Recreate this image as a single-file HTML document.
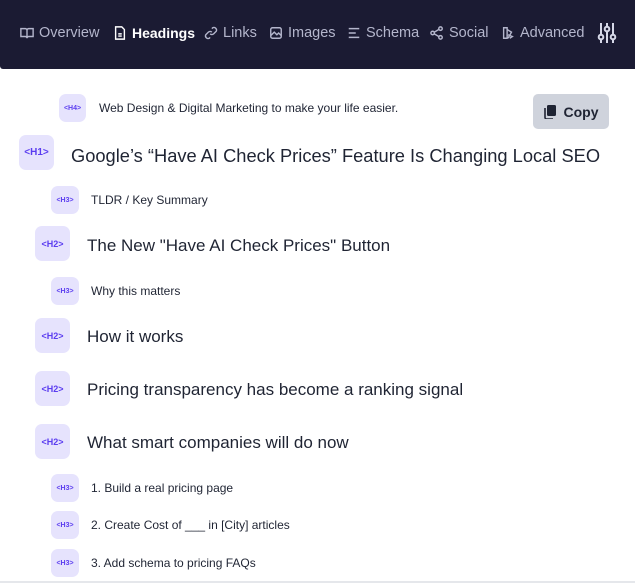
<!DOCTYPE html>
<html><head><meta charset="utf-8"><style>
*{margin:0;padding:0;box-sizing:border-box}
body{width:635px;height:583px;overflow:hidden;background:#fff;font-family:"Liberation Sans",sans-serif;position:relative;color:#1f2937}
.nav{position:absolute;left:0;top:0;width:635px;height:69px;background:#1b1b33;border-bottom-left-radius:3px}
.nav .it{position:absolute;top:24px;font-size:14.5px;color:#b4b6cc;display:flex;align-items:center;gap:5px;height:18px}
.nav .it svg{width:14px;height:14px;stroke:currentColor;fill:none;stroke-width:1.6}
.nav .act{color:#fff;font-weight:bold;font-size:14px}
.b{position:absolute;background:#e6e3fd;color:#5b3df0;font-weight:bold;display:flex;align-items:center;justify-content:center;border-radius:7px}
.t{position:absolute;white-space:nowrap;color:#1f2433}
.copy{position:absolute;left:533px;top:94px;width:76px;height:35px;background:#cfd3dc;border-radius:5px;font-weight:bold;font-size:14px;display:flex;align-items:center;justify-content:center;gap:8px;color:#1f2433}
</style></head><body>
<div class="nav">
<div class="it" style="left:20px"><svg viewBox="0 0 16 16"><path d="M1 3h5a2 2 0 0 1 2 2v9a2 2 0 0 0-2-2H1zM15 3h-5a2 2 0 0 0-2 2v9a2 2 0 0 1 2-2h5z"/></svg>Overview</div>
<div class="it act" style="left:113px"><svg viewBox="0 0 16 16"><path d="M3 1h7l3 3v11H3zM6 9h4M6 11.5h4"/></svg>Headings</div>
<div class="it" style="left:204px"><svg viewBox="0 0 16 16"><path d="M7 9a3 3 0 0 0 4 0l3-3a3 3 0 0 0-4-4l-1 1M9 7a3 3 0 0 0-4 0l-3 3a3 3 0 0 0 4 4l1-1"/></svg>Links</div>
<div class="it" style="left:269px"><svg viewBox="0 0 16 16"><rect x="2" y="2" width="12" height="12" rx="2"/><path d="M2 11l4-4 3 3 2-2 3 3"/></svg>Images</div>
<div class="it" style="left:347px"><svg viewBox="0 0 16 16"><path d="M2 3h12M2 8h8M2 13h12"/></svg>Schema</div>
<div class="it" style="left:430px"><svg viewBox="0 0 16 16"><circle cx="3" cy="8" r="2"/><circle cx="12" cy="3" r="2"/><circle cx="12" cy="13" r="2"/><path d="M5 7l5-3M5 9l5 3"/></svg>Social</div>
<div class="it" style="left:501px"><svg viewBox="0 0 16 16"><path d="M3 2h4v12H3zM7 4l5 3-4 7M8 10l5 2-3 2"/></svg>Advanced</div>
<svg style="position:absolute;left:597px;top:22px" width="20" height="22" viewBox="0 0 20 22" stroke="#d6d8e8" stroke-width="2" fill="none"><path d="M4 1v20M10 1v20M16 1v20"/><circle cx="4" cy="15" r="2.3" fill="#1b1b33"/><circle cx="10" cy="7" r="2.3" fill="#1b1b33"/><circle cx="16" cy="15" r="2.3" fill="#1b1b33"/></svg>
</div>

<div class="copy"><svg width="12" height="14" viewBox="0 0 12 14"><rect x="3" y="0" width="9" height="11" rx="1.5" fill="#1f2433"/><path d="M1 3v9.5a1.5 1.5 0 0 0 1.5 1.5H9" stroke="#1f2433" stroke-width="1.6" fill="none"/></svg>Copy</div>

<div class="b" style="left:59px;top:94px;width:27px;height:28px;font-size:7px">&lt;H4&gt;</div>
<div class="t" style="left:99px;top:101px;font-size:12px">Web Design &amp; Digital Marketing to make your life easier.</div>

<div class="b" style="left:19px;top:135px;width:35px;height:35px;font-size:10px">&lt;H1&gt;</div>
<div class="t" style="left:71px;top:145px;font-size:18.3px">Google’s “Have AI Check Prices” Feature Is Changing Local SEO</div>

<div class="b" style="left:51px;top:186px;width:28px;height:28px;font-size:7px">&lt;H3&gt;</div>
<div class="t" style="left:91px;top:193px;font-size:12px">TLDR / Key Summary</div>

<div class="b" style="left:35px;top:226px;width:35px;height:35px;font-size:9px">&lt;H2&gt;</div>
<div class="t" style="left:87px;top:236px;font-size:17px">The New "Have AI Check Prices" Button</div>

<div class="b" style="left:51px;top:277px;width:28px;height:28px;font-size:7px">&lt;H3&gt;</div>
<div class="t" style="left:91px;top:284px;font-size:12px">Why this matters</div>

<div class="b" style="left:35px;top:318px;width:35px;height:35px;font-size:9px">&lt;H2&gt;</div>
<div class="t" style="left:87px;top:327px;font-size:17px">How it works</div>

<div class="b" style="left:35px;top:371px;width:35px;height:35px;font-size:9px">&lt;H2&gt;</div>
<div class="t" style="left:87px;top:380px;font-size:17px">Pricing transparency has become a ranking signal</div>

<div class="b" style="left:35px;top:424px;width:35px;height:35px;font-size:9px">&lt;H2&gt;</div>
<div class="t" style="left:87px;top:433px;font-size:17px">What smart companies will do now</div>

<div class="b" style="left:51px;top:474px;width:28px;height:28px;font-size:7px">&lt;H3&gt;</div>
<div class="t" style="left:91px;top:481px;font-size:12px">1. Build a real pricing page</div>

<div class="b" style="left:51px;top:511px;width:28px;height:28px;font-size:7px">&lt;H3&gt;</div>
<div class="t" style="left:91px;top:518px;font-size:12px">2. Create Cost of ___ in [City] articles</div>

<div class="b" style="left:51px;top:549px;width:28px;height:28px;font-size:7px">&lt;H3&gt;</div>
<div class="t" style="left:91px;top:556px;font-size:12px">3. Add schema to pricing FAQs</div>
<div style="position:absolute;left:0;top:581px;width:635px;height:2px;background:#e5e7eb"></div>
</body></html>
